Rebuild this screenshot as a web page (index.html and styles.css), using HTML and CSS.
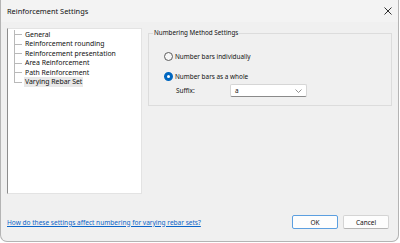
FILE: index.html
```html
<!DOCTYPE html>
<html lang="en">
<head>
    <meta charset="UTF-8">
    <title>Reinforcement Settings</title>
    <link rel="stylesheet" href="styles.css">
</head>
<body>

    <div class="window">
        <!-- Title bar -->
        <div class="title-bar">
            <span class="title">Reinforcement Settings</span>
            <svg class="close-icon" width="8" height="8" viewBox="0 0 8 8">
                <path d="M0.5 0.5 L7.5 7.5 M7.5 0.5 L0.5 7.5" stroke="#1a1a1a" stroke-width="0.9"/>
            </svg>
        </div>

        <div class="dialog-body">
            <div class="main-row">
                <!-- Settings tree -->
                <div class="tree-panel">
                    <ul class="tree">
                        <li><span>General</span></li>
                        <li><span>Reinforcement rounding</span></li>
                        <li><span>Reinforcement presentation</span></li>
                        <li><span>Area Reinforcement</span></li>
                        <li><span>Path Reinforcement</span></li>
                        <li class="selected"><span>Varying Rebar Set</span></li>
                    </ul>
                </div>

                <!-- Page content -->
                <div class="page">
                    <fieldset class="group">
                        <legend>Numbering Method Settings</legend>
                        <label class="radio-row">
                            <span class="radio"></span>
                            Number bars individually
                        </label>
                        <label class="radio-row">
                            <span class="radio checked"></span>
                            Number bars as a whole
                        </label>
                        <div class="suffix-row">
                            <span class="suffix-label">Suffix:</span>
                            <div class="combo">
                                <span>a</span>
                                <svg width="7" height="4" viewBox="0 0 7 4">
                                    <path d="M0.5 0.5 L3.5 3.5 L6.5 0.5" stroke="#777" stroke-width="0.8" fill="none"/>
                                </svg>
                            </div>
                        </div>
                    </fieldset>
                </div>
            </div>

            <div class="footer">
                <a class="help-link" href="#">How do these settings affect numbering for varying rebar sets?</a>
                <div class="buttons">
                    <button class="btn btn-default">OK</button>
                    <button class="btn">Cancel</button>
                </div>
            </div>
        </div>
    </div>

</body>
</html>
```

FILE: styles.css
```css
* {
    box-sizing: border-box;
}

body {
    margin: 0;
    background-color: #fff;
    font-family: 'Noto Sans', 'Open Sans', sans-serif;
    font-size: 6.5px;
    color: #111;
}

.window {
    width: 399px;
    height: 242px;
    background-color: #f0f0f0;
    border: 1px solid #b4b4b4;
    border-top: none;
    border-radius: 0 0 7px 7px;
    display: flex;
    flex-direction: column;
    overflow: hidden;
}

.title-bar {
    height: 22px;
    background-color: #f3f3f3;
    display: flex;
    align-items: center;
    justify-content: space-between;
    padding: 0 6px 1px 6px;
}

.title {
    font-size: 7.4px;
    color: #111;
}

.dialog-body {
    flex: 1;
    display: flex;
    flex-direction: column;
    padding: 6px 6px 12px 6px;
}

.main-row {
    display: flex;
    gap: 6px;
}

/* Tree */
.tree-panel {
    width: 135px;
    height: 166px;
    background-color: #fff;
    border: 1px solid #e3e3e3;
    border-left-color: #8c8c8c;
}

.tree {
    list-style: none;
    margin: 0;
    padding: 0.5px 0 0 15px;
    font-size: 6.9px;
}

.tree li {
    position: relative;
    height: 9.5px;
    line-height: 9.5px;
    padding-left: 2px;
}

.tree li::before {
    content: "";
    position: absolute;
    left: -9px;
    top: 4.5px;
    width: 8px;
    border-top: 1px solid #b9b9b9;
}

.tree li::after {
    content: "";
    position: absolute;
    left: -9px;
    top: 0;
    height: 9.5px;
    border-left: 1px solid #b9b9b9;
}

.tree li:last-child::after {
    height: 5px;
}

.tree li.selected span {
    display: inline-block;
    background-color: #e8e8e8;
    padding: 0 1px;
    margin-left: -1px;
    line-height: 10px;
}

/* Group box */
.page {
    flex: 1;
}

.group {
    margin: 0;
    width: 244px;
    height: 78px;
    border: 1px solid #dcdcdc;
    padding: 13px 0 0 16px;
    font-size: 6.4px;
}

.group legend {
    padding: 0 1px;
    margin-left: -12px;
    font-size: 6.3px;
    line-height: 10px;
}

.radio-row {
    display: flex;
    align-items: center;
    gap: 2px;
    height: 10px;
    margin-bottom: 10px;
    margin-left: -1px;
}

.radio {
    width: 9px;
    height: 9px;
    border-radius: 50%;
    border: 1px solid #5c5c5c;
    background-color: #f7f7f7;
}

.radio.checked {
    border: 3px solid #0067c0;
    background-color: #fff;
}

.suffix-row {
    display: flex;
    align-items: center;
    margin-top: -7px;
    padding-left: 11px;
}

.suffix-label {
    width: 54px;
}

.combo {
    width: 77px;
    height: 13px;
    background-color: #fff;
    border: 1px solid #d6d6d6;
    border-bottom-color: #8a8a8a;
    border-radius: 2px;
    display: flex;
    align-items: center;
    justify-content: space-between;
    padding: 0 4px 0 4px;
}

/* Footer */
.footer {
    margin-top: auto;
    display: flex;
    align-items: center;
    justify-content: space-between;
    padding-right: 3px;
}

.help-link {
    color: #0b64c8;
    text-decoration: underline;
    font-size: 6.55px;
}

.buttons {
    display: flex;
    gap: 5px;
}

.btn {
    font-family: inherit;
    font-size: 6.5px;
    color: #111;
    width: 46px;
    height: 14px;
    background-color: #fdfdfd;
    border: 1px solid #d4d4d4;
    border-bottom-color: #b5b5b5;
    border-radius: 2px;
    padding: 0;
}

.btn-default {
    border: 1px solid #5c9fe0;
}
```
